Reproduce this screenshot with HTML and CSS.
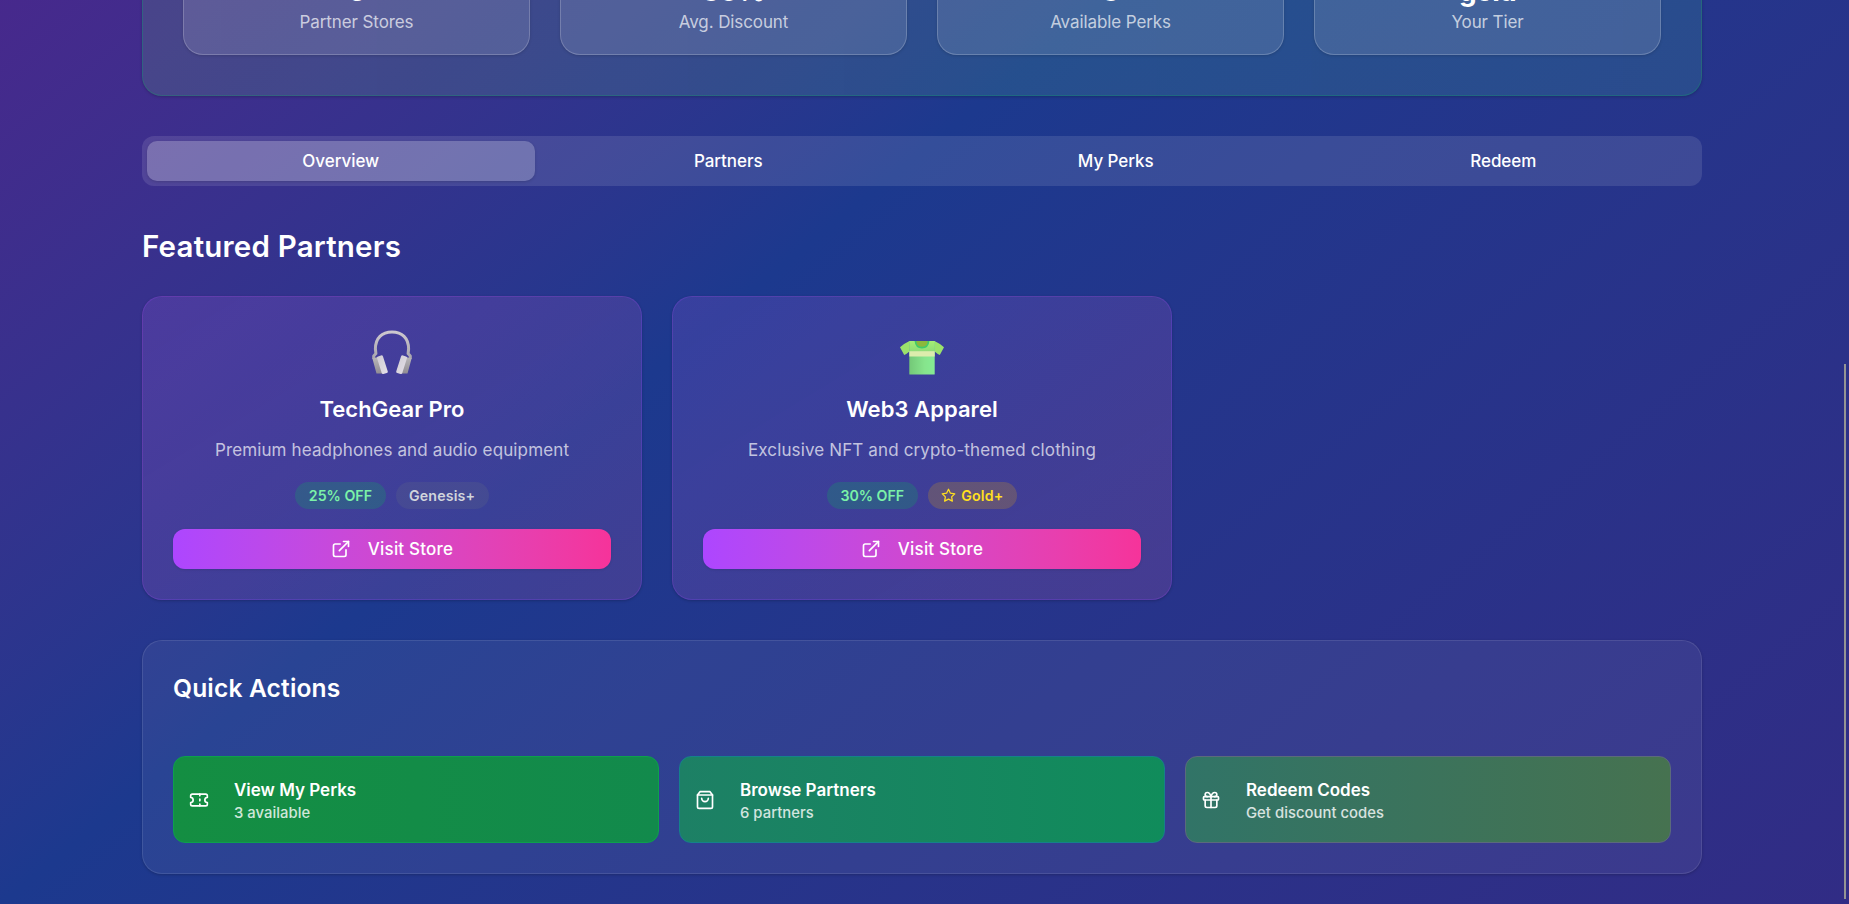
FILE: index.html
```html
<!DOCTYPE html>
<html lang="en">
<head>
    <meta charset="UTF-8">
    <meta name="viewport" content="width=device-width, initial-scale=1.0">
    <title>Partner Perks</title>
    <link rel="stylesheet" href="styles.css">
</head>
<body>
    <main class="page">
        <section class="hero">
            <div class="stat">
                <div class="stat-value">6</div>
                <div class="stat-label">Partner Stores</div>
            </div>
            <div class="stat">
                <div class="stat-value">30%</div>
                <div class="stat-label">Avg. Discount</div>
            </div>
            <div class="stat">
                <div class="stat-value">3</div>
                <div class="stat-label">Available Perks</div>
            </div>
            <div class="stat">
                <div class="stat-value">gold</div>
                <div class="stat-label">Your Tier</div>
            </div>
        </section>

        <nav class="tabs">
            <button class="tab active">Overview</button>
            <button class="tab">Partners</button>
            <button class="tab">My Perks</button>
            <button class="tab">Redeem</button>
        </nav>

        <h2 class="section-title">Featured Partners</h2>

        <section class="partners">
            <article class="partner">
                <div class="partner-logo">
                    <svg width="40" height="45" viewBox="0 0 40 45">
                        <defs>
                            <linearGradient id="band" gradientUnits="userSpaceOnUse" x1="0" y1="0" x2="0" y2="29">
                                <stop offset="0" stop-color="#cfcad1"/>
                                <stop offset="1" stop-color="#a9a5ad"/>
                            </linearGradient>
                            <linearGradient id="cup" x1="0" y1="0" x2="0" y2="1">
                                <stop offset="0" stop-color="#b9b6b9"/>
                                <stop offset="1" stop-color="#918d93"/>
                            </linearGradient>
                            <linearGradient id="pad" x1="0" y1="0" x2="1" y2="1">
                                <stop offset="0" stop-color="#d0ccd3"/>
                                <stop offset="1" stop-color="#e4dfe8"/>
                            </linearGradient>
                        </defs>
                        <path d="M1.700 29v-3l2.200-2.400-.5-4.600C3.400 8 10 2 20 2s16.600 6 16.600 17l-.5 4.600 2.200 2.400v3" fill="none" stroke="url(#band)" stroke-width="3" stroke-linejoin="round"/>
                        <path d="M.4 28.500 6 27l4.500 16.500-6 .1zM39.600 28.500 34 27l-4.500 16.500 6 .1z" fill="url(#cup)"/>
                        <path d="M6 26.400 9 25.400q1.600-.3 2 1.200l4.800 14.800q.3 1.300-1 1.700l-3.400.9q-1.400.3-1.700-1L5 28q-.2-1.200 1-1.600z" fill="url(#pad)"/>
                        <path d="M34 26.400 31 25.400q-1.600-.3-2 1.200l-4.800 14.800q-.3 1.300 1 1.700l3.400.9q1.400.3 1.700-1L35 28q.2-1.200-1-1.600z" fill="url(#pad)"/>
                    </svg>
                </div>
                <h3 class="partner-name">TechGear Pro</h3>
                <p class="partner-text">Premium headphones and audio equipment</p>
                <div class="badges">
                    <span class="badge badge-discount">25% OFF</span>
                    <span class="badge badge-genesis">Genesis+</span>
                </div>
                <button class="visit">
                    <svg class="icon" viewBox="0 0 24 24"><path d="M15 3h6v6"/><path d="M10 14 21 3"/><path d="M18 13v6a2 2 0 0 1-2 2H5a2 2 0 0 1-2-2V8a2 2 0 0 1 2-2h6"/></svg>
                    Visit Store
                </button>
            </article>

            <article class="partner">
                <div class="partner-logo">
                    <svg width="44" height="35" viewBox="0 0 44 35">
                        <defs>
                            <linearGradient id="shirt" x1="0" y1="0" x2="1" y2="0">
                                <stop offset="0" stop-color="#74c878"/>
                                <stop offset=".6" stop-color="#86e48c"/>
                                <stop offset="1" stop-color="#86ec94"/>
                            </linearGradient>
                            <linearGradient id="yoke" x1="0" y1="0" x2="0" y2="1">
                                <stop offset="0" stop-color="#a6ee74"/>
                                <stop offset="1" stop-color="#8edc78"/>
                            </linearGradient>
                        </defs>
                        <path d="M9.500 1Q4 3.500 0 7.300L4.200 15q2.600-1 5.200-3.400V1.500zM34.500 1Q40 3.500 44 7.300L39.800 15q-2.600-1-5.200-3.400V1.500z" fill="#9be26c"/>
                        <path d="M9.300 1h25.400v33q0 .6-.6.6H9.900q-.6 0-.6-.6z" fill="url(#shirt)"/>
                        <path d="M9.300 1h25.400v10.500H9.300z" fill="url(#yoke)"/>
                        <path d="M9.300 11.200h25.400v5.300H9.300z" fill="#dcecac"/>
                        <path d="M15.500 1h13q-.8 6.500-6.500 6.500T15.500 1z" fill="#8cb83c"/>
                        <path d="M15.400 1q.6 6.700 6.600 6.700T28.600 1" fill="none" stroke="#3fca6c" stroke-width="1.700"/>
                    </svg>
                </div>
                <h3 class="partner-name">Web3 Apparel</h3>
                <p class="partner-text">Exclusive NFT and crypto-themed clothing</p>
                <div class="badges">
                    <span class="badge badge-discount">30% OFF</span>
                    <span class="badge badge-gold">
                        <svg class="icon icon-star" viewBox="0 0 24 24"><path d="m12 2 3.090 6.260L22 9.270l-5 4.870 1.180 6.880L12 17.770l-6.180 3.250L7 14.140 2 9.270l6.910-1.010z"/></svg>
                        Gold+
                    </span>
                </div>
                <button class="visit">
                    <svg class="icon" viewBox="0 0 24 24"><path d="M15 3h6v6"/><path d="M10 14 21 3"/><path d="M18 13v6a2 2 0 0 1-2 2H5a2 2 0 0 1-2-2V8a2 2 0 0 1 2-2h6"/></svg>
                    Visit Store
                </button>
            </article>
        </section>

        <section class="quick">
            <h3 class="quick-title">Quick Actions</h3>
            <div class="actions">
                <button class="action action-perks">
                    <svg class="icon" viewBox="0 0 24 24"><path d="M2 9a3 3 0 0 1 0 6v2a2 2 0 0 0 2 2h16a2 2 0 0 0 2-2v-2a3 3 0 0 1 0-6V7a2 2 0 0 0-2-2H4a2 2 0 0 0-2 2Z"/><path d="M13 5v2"/><path d="M13 17v2"/><path d="M13 11v2"/></svg>
                    <span class="action-text">
                        <span class="action-name">View My Perks</span>
                        <span class="action-info">3 available</span>
                    </span>
                </button>
                <button class="action action-browse">
                    <svg class="icon" viewBox="0 0 24 24"><path d="M6 2 3 6v14a2 2 0 0 0 2 2h14a2 2 0 0 0 2-2V6l-3-4Z"/><path d="M3 6h18"/><path d="M16 10a4 4 0 0 1-8 0"/></svg>
                    <span class="action-text">
                        <span class="action-name">Browse Partners</span>
                        <span class="action-info">6 partners</span>
                    </span>
                </button>
                <button class="action action-redeem">
                    <svg class="icon" viewBox="0 0 24 24"><rect x="3" y="8" width="18" height="4" rx="1"/><path d="M12 8v13"/><path d="M19 12v7a2 2 0 0 1-2 2H7a2 2 0 0 1-2-2v-7"/><path d="M7.500 8a2.500 2.500 0 0 1 0-5A4.800 8 0 0 1 12 8a4.800 8 0 0 1 4.500-5 2.500 2.500 0 0 1 0 5"/></svg>
                    <span class="action-text">
                        <span class="action-name">Redeem Codes</span>
                        <span class="action-info">Get discount codes</span>
                    </span>
                </button>
            </div>
        </section>
    </main>
    <div class="scrollbar"></div>
</body>
</html>
```
FILE: styles.css
```css
* {
    box-sizing: border-box;
}
body {
    margin: 0;
    height: 904px;
    overflow: hidden;
    font-family: Inter, "Liberation Sans", sans-serif;
    font-size: 17px;
    line-height: 25px;
    color: #fff;
    background: #1c398e linear-gradient(to bottom right in oklab, #59168b, #1c398e, #312c85) left bottom / 100% 1510px no-repeat;
}
h2, h3, p {
    margin: 0;
}
button {
    font: inherit;
    color: inherit;
    border: none;
    background: none;
    padding: 0;
    cursor: pointer;
}
/* page is scrolled to the end, so the content sits on the bottom edge */
.page {
    height: 904px;
    padding: 0 147px 30px 142px;
    display: flex;
    flex-direction: column;
    justify-content: flex-end;
}
.page > * {
    flex-shrink: 0;
}
.icon {
    width: 20px;
    height: 20px;
    flex-shrink: 0;
    fill: none;
    stroke: currentColor;
    stroke-width: 2;
    stroke-linecap: round;
    stroke-linejoin: round;
}

.hero {
    display: grid;
    grid-template-columns: repeat(4, 1fr);
    gap: 30px;
    padding: 40px;
    border: 1px solid rgba(0, 201, 80, 0.22);
    border-radius: 20px;
    background: linear-gradient(to right, rgba(100, 168, 130, 0.2), rgba(56, 150, 152, 0.24));
    box-shadow: 0 1px 3px rgba(0, 0, 0, 0.2);
}
.stat {
    padding: 20px 20px 19px;
    text-align: center;
    border: 1px solid rgba(255, 255, 255, 0.2);
    border-radius: 20px;
    background: rgba(255, 255, 255, 0.12);
    box-shadow: 0 1px 3px rgba(0, 0, 0, 0.15);
}
.stat-value {
    font-size: 28px;
    line-height: 37px;
    font-weight: 700;
    letter-spacing: -0.8px;
}
.stat-label {
    color: rgba(255, 255, 255, 0.7);
    letter-spacing: -0.1px;
}

.tabs {
    display: grid;
    grid-template-columns: repeat(4, 1fr);
    margin-top: 40px;
    padding: 5px;
    border-radius: 12px;
    background: rgba(255, 255, 255, 0.11);
}
.tab {
    height: 40px;
    padding-top: 1px;
    border-radius: 10px;
    font-weight: 500;
    letter-spacing: -0.05px;
}
.tab.active {
    background: rgba(255, 255, 255, 0.23);
    box-shadow: 0 1px 3px rgba(0, 0, 0, 0.15);
}

.section-title {
    margin: 40px 0 30px;
    font-size: 29.5px;
    line-height: 40px;
    font-weight: 600;
    letter-spacing: 0.2px;
}

.partners {
    display: grid;
    grid-template-columns: repeat(3, 1fr);
    gap: 30px;
}
.partner {
    padding: 30px;
    text-align: center;
    border: 1px solid rgba(173, 70, 255, 0.2);
    border-radius: 20px;
    background: linear-gradient(to bottom right, rgba(158, 97, 230, 0.2), rgba(210, 100, 178, 0.18));
    box-shadow: 0 1px 3px rgba(0, 0, 0, 0.2);
}
.partner-logo {
    display: flex;
    align-items: flex-end;
    justify-content: center;
    height: 48px;
}
.partner-name {
    margin-top: 19px;
    font-size: 22px;
    line-height: 30px;
    font-weight: 600;
    letter-spacing: 0.05px;
}
.partner-text {
    margin-top: 14px;
    color: rgba(255, 255, 255, 0.7);
    letter-spacing: 0.13px;
}
.badges {
    display: flex;
    justify-content: center;
    gap: 10px;
    margin: 19px 0 20px;
}
.badge {
    display: flex;
    align-items: center;
    height: 27px;
    padding: 0 13.5px;
    border-radius: 14px;
    font-size: 14.2px;
    font-weight: 600;
}
.badge-discount {
    color: #7bf1a8;
    background: rgba(0, 201, 80, 0.2);
}
.badge-genesis {
    color: #d1d5dc;
    background: rgba(106, 114, 130, 0.2);
    letter-spacing: 0.15px;
}
.badge-gold {
    gap: 5px;
    color: #ffdf20;
    background: rgba(240, 177, 0, 0.2);
    letter-spacing: 0.2px;
}
.icon-star {
    width: 15px;
    height: 15px;
}
.visit {
    display: flex;
    align-items: center;
    justify-content: center;
    gap: 17px;
    width: 100%;
    height: 40px;
    border-radius: 12px;
    font-weight: 500;
    letter-spacing: 0.2px;
    background: linear-gradient(to right in oklab, #ad46ff, #f6339a);
    box-shadow: 0 1px 3px rgba(0, 0, 0, 0.1);
}

.quick {
    margin-top: 40px;
    padding: 30px;
    border: 1px solid rgba(255, 255, 255, 0.1);
    border-radius: 20px;
    background: rgba(255, 255, 255, 0.06);
    box-shadow: 0 1px 3px rgba(0, 0, 0, 0.2);
}
.quick-title {
    margin-bottom: 50px;
    font-size: 24.6px;
    line-height: 35px;
    font-weight: 600;
    letter-spacing: 0.15px;
}
.actions {
    display: grid;
    grid-template-columns: repeat(3, 1fr);
    gap: 20px;
}
.action {
    display: flex;
    align-items: center;
    gap: 25px;
    height: 87px;
    padding: 0 15px;
    border: 1px solid;
    border-radius: 12px;
    text-align: left;
}
.action-perks {
    border-color: #0da04c;
    background: linear-gradient(to right, #148e42, #128a4c);
}
.action-browse {
    border-color: #15828a;
    background: linear-gradient(to right, #1d8065, #108c5b);
}
.action-redeem {
    border-color: #5b6a7c;
    background: linear-gradient(to right, #317467, #467250);
}
.action-text {
    display: flex;
    flex-direction: column;
    padding-top: 2px;
}
.action-name {
    font-weight: 600;
}
.action-info {
    font-size: 14.8px;
    line-height: 20px;
    font-weight: 500;
    letter-spacing: 0.05px;
    opacity: 0.8;
}

.scrollbar {
    position: absolute;
    top: 364px;
    right: 3px;
    width: 2px;
    height: 535px;
    background: #949494;
}
```
